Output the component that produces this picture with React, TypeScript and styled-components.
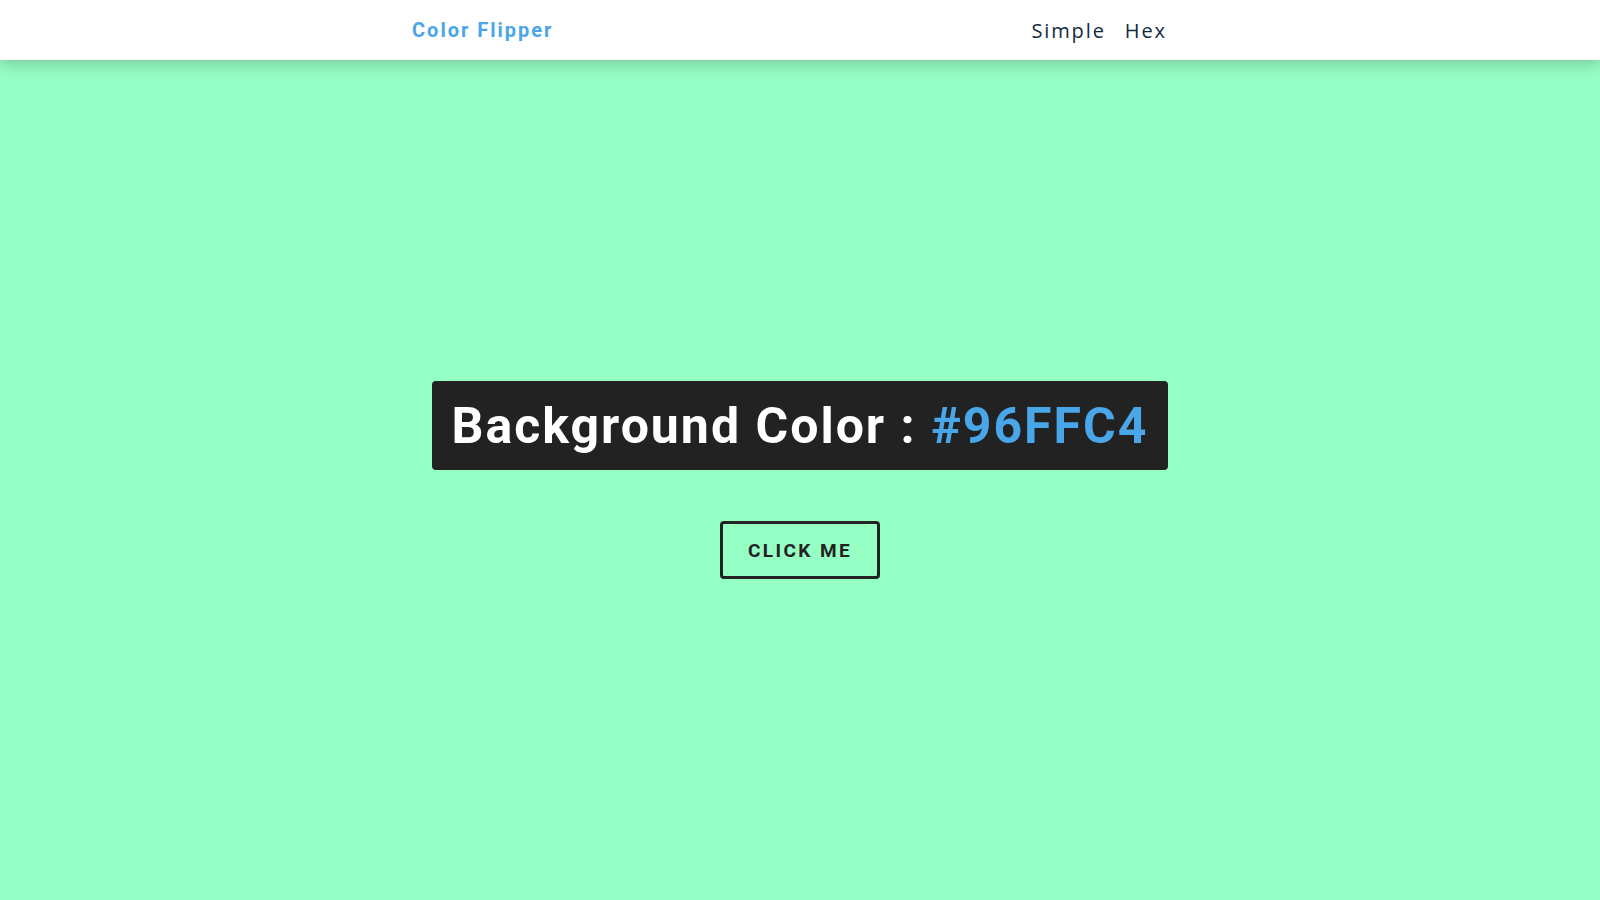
import React, { useState } from "react";
import styled, { createGlobalStyle } from "styled-components";

const GlobalStyle = createGlobalStyle`
  *, *::before, *::after { box-sizing: border-box; margin: 0; padding: 0; }
  html, body { height: 100%; }
  body {
    font-family: "Open Sans", "Liberation Sans", sans-serif;
    background: #ffffff;
  }
  #root { min-height: 100vh; }
`;

const Page = styled.div<{ $bg: string }>`
  min-height: 100vh;
  display: flex;
  flex-direction: column;
  background: ${(p) => p.$bg};
`;

const Nav = styled.nav`
  height: 60px;
  background: #ffffff;
  box-shadow: 0 5px 15px rgba(0, 0, 0, 0.2);
  display: flex;
  align-items: center;
  position: relative;
  z-index: 1;
`;

const NavCenter = styled.div`
  width: 755px;
  margin-left: 412px;
  display: flex;
  justify-content: space-between;
  align-items: center;
`;

const Brand = styled.h4`
  font-family: Roboto, "Liberation Sans", sans-serif;
  font-weight: 700;
  font-size: 20px;
  letter-spacing: 2px;
  color: #49a6e9;
`;

const Links = styled.ul`
  list-style: none;
  display: flex;
  gap: 19px;
`;

const NavLink = styled.a`
  font-family: "Open Sans", "Liberation Sans", sans-serif;
  font-size: 20px;
  font-weight: 500;
  letter-spacing: 1.9px;
  color: #102a42;
  text-decoration: none;
  cursor: pointer;
`;

const Main = styled.main`
  flex: 1;
  display: flex;
  flex-direction: column;
  align-items: center;
  justify-content: center;
`;

const Banner = styled.h2`
  height: 89px;
  display: flex;
  align-items: center;
  padding: 0 20px;
  background: #222222;
  color: #ffffff;
  border-radius: 4px;
  font-family: Roboto, "Liberation Sans", sans-serif;
  font-weight: 700;
  font-size: 50px;
  letter-spacing: 2px;
  white-space: pre;
  margin-bottom: 51px;
`;

const HexValue = styled.span`
  color: #49a6e9;
`;

const Button = styled.button`
  width: 160px;
  height: 58px;
  background: transparent;
  border: 3px solid #222222;
  border-radius: 4px;
  font-family: Roboto, "Liberation Sans", sans-serif;
  font-weight: 700;
  font-size: 19px;
  letter-spacing: 2.4px;
  text-transform: uppercase;
  color: #222222;
  cursor: pointer;
`;

export default function App() {
  const [color] = useState("#96FFC4");
  return (
    <>
      <GlobalStyle />
      <Page $bg={color}>
        <Nav>
          <NavCenter>
            <Brand>Color Flipper</Brand>
            <Links>
              <li>
                <NavLink>Simple</NavLink>
              </li>
              <li>
                <NavLink>Hex</NavLink>
              </li>
            </Links>
          </NavCenter>
        </Nav>
        <Main>
          <Banner>
            Background Color : <HexValue>{color}</HexValue>
          </Banner>
          <Button>click me</Button>
        </Main>
      </Page>
    </>
  );
}
